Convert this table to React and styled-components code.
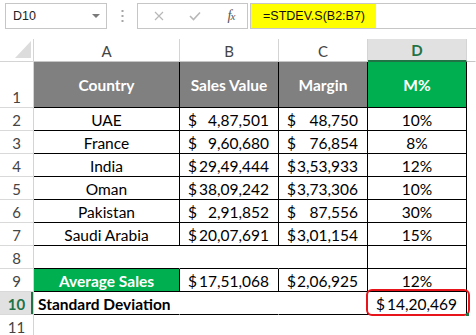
import React from "react";
import styled, { createGlobalStyle, css } from "styled-components";

const GlobalStyle = createGlobalStyle`
  html, body {
    margin: 0;
    padding: 0;
    background: #ffffff;
    overflow: hidden;
  }
  * { box-sizing: border-box; }
`;

const Page = styled.div`
  width: 476px;
  height: 335px;
  background: #fff;
  font-family: Lato, "Open Sans", sans-serif;
`;

const Bar = styled.div`
  height: 39px;
  display: flex;
  align-items: flex-start;
  padding: 3px 0 0 5px;
  font-family: "Liberation Sans", Arial, sans-serif;
  font-size: 12.5px;
  color: #222;
`;

const NameBox = styled.div`
  width: 102px;
  height: 26px;
  border: 1px solid #c6c6c6;
  display: flex;
  align-items: center;
  justify-content: space-between;
  padding: 0 6px 0 7px;
`;

const Caret = styled.span`
  width: 0;
  height: 0;
  border-left: 4px solid transparent;
  border-right: 4px solid transparent;
  border-top: 4px solid #7a7a7a;
`;

const Grip = styled.div`
  width: 30px;
  height: 26px;
  display: flex;
  align-items: center;
  justify-content: center;
`;

const FxBox = styled.div`
  width: 111px;
  height: 26px;
  border: 1px solid #c6c6c6;
  display: grid;
  grid-template-columns: 37px 36px 36px;
  align-items: center;
  justify-items: center;
  padding-left: 2px;
`;

const FxLabel = styled.span`
  font-family: "Liberation Serif", "Times New Roman", serif;
  font-style: italic;
  font-size: 14px;
  color: #555;
  letter-spacing: -1px;
  & > small {
    font-size: 11px;
  }
`;

const FormulaInput = styled.div`
  flex: 1;
  margin-left: 2px;
  height: 26px;
  border: 1px solid #c6c6c6;
  border-right: none;
  display: flex;
`;

const Highlight = styled.div`
  width: 125px;
  height: 100%;
  background: #ffff00;
  display: flex;
  align-items: center;
  padding-left: 12px;
  color: #111;
`;

const Sheet = styled.div`
  display: grid;
  grid-template-columns: 34px 146px 99px 89px 99px 1fr;
  grid-template-rows: 23px 46px repeat(9, 23px) 23px;
`;

const Corner = styled.div`
  border-right: 1px solid #d4d4d4;
  border-bottom: 1px solid #d4d4d4;
  display: flex;
  align-items: flex-end;
  justify-content: flex-end;
  padding: 0 2px 3px 0;
`;

const CornerTri = styled.span`
  width: 0;
  height: 0;
  border-left: 16px solid transparent;
  border-bottom: 17px solid #dcdcdc;
`;

const ColHead = styled.div`
  border-right: 1px solid ${(p) => (p.$last ? "transparent" : "#d4d4d4")};
  border-bottom: 1px solid #c6c6c6;
  display: flex;
  align-items: center;
  justify-content: center;
  font-size: 15px;
  color: #444;
  padding-top: 1px;
  ${(p) =>
    p.$active &&
    css`
      background: #e1e1e1;
      color: #217346;
      font-weight: 700;
      border-bottom: 2px solid #217346;
    `}
`;

const RowHead = styled.div`
  border-right: 1px solid #d4d4d4;
  border-bottom: 1px solid #d9d9d9;
  display: flex;
  align-items: flex-end;
  justify-content: center;
  font-size: 15px;
  line-height: 20px;
  color: #444;
  ${(p) =>
    p.$active &&
    css`
      background: #e1e1e1;
      color: #217346;
      font-weight: 700;
      box-shadow: inset -2px 0 0 #217346;
    `}
`;

const Cell = styled.div`
  position: relative;
  display: flex;
  align-items: ${(p) => (p.$middle ? "center" : "flex-end")};
  justify-content: ${(p) =>
    p.$align === "left" ? "flex-start" : p.$align === "acct" ? "space-between" : "center"};
  padding: ${(p) => (p.$align === "acct" ? "0 9px 0 8px" : p.$align === "left" ? "0 0 0 4px" : "0")};
  background: ${(p) => p.$bg || "transparent"};
  color: ${(p) => p.$color || "#000"};
  font-weight: ${(p) => (p.$bold ? 700 : 400)};
  font-size: 15.5px;
  line-height: 20px;
  white-space: nowrap;
  border-right: 1px solid ${(p) => (p.$open ? "transparent" : "#000")};
  border-bottom: 1px solid #000;
`;

const Blank = styled.div``;

const Mark = styled.div`
  position: absolute;
  left: -2px;
  top: -3px;
  width: 104px;
  height: 27px;
  border: 2.5px solid #e8141b;
  border-radius: 6px;
  pointer-events: none;
`;

const Handle = styled.span`
  position: absolute;
  right: -3px;
  bottom: -2px;
  width: 3px;
  height: 3px;
  background: #217346;
`;

const Acct = ({ v, sep }) => (
  <>
    <span>{sep ? "$ " : "$"}</span>
    <span>{v}</span>
  </>
);

const rows = [
  ["UAE", "4,87,501", "48,750", "10%"],
  ["France", "9,60,680", "76,854", "8%"],
  ["India", "29,49,444", "3,53,933", "12%"],
  ["Oman", "38,09,242", "3,73,306", "10%"],
  ["Pakistan", "2,91,852", "87,556", "30%"],
  ["Saudi Arabia", "20,07,691", "3,01,154", "15%"],
];

const GRAY = "#808080";
const GREEN = "#00b050";

export default function App() {
  return (
    <Page>
      <GlobalStyle />
      <Bar>
        <NameBox>
          <span>D10</span>
          <Caret />
        </NameBox>
        <Grip>
          <svg width="3" height="12" viewBox="0 0 3 12">
            <rect x="0.5" y="0" width="2" height="2" fill="#a6a6a6" />
            <rect x="0.5" y="5" width="2" height="2" fill="#a6a6a6" />
            <rect x="0.5" y="10" width="2" height="2" fill="#a6a6a6" />
          </svg>
        </Grip>
        <FxBox>
          <svg width="10" height="10" viewBox="0 0 10 10">
            <path d="M1 1 L9 9 M9 1 L1 9" stroke="#b8b8b8" strokeWidth="1.2" fill="none" />
          </svg>
          <svg width="12" height="10" viewBox="0 0 12 10">
            <path d="M1 5 L4.5 8.5 L11 1.5" stroke="#b8b8b8" strokeWidth="1.6" fill="none" />
          </svg>
          <FxLabel>
            f<small>x</small>
          </FxLabel>
        </FxBox>
        <FormulaInput>
          <Highlight>=STDEV.S(B2:B7)</Highlight>
        </FormulaInput>
      </Bar>

      <Sheet>
        <Corner>
          <CornerTri />
        </Corner>
        <ColHead>A</ColHead>
        <ColHead>B</ColHead>
        <ColHead>C</ColHead>
        <ColHead $active>D</ColHead>
        <ColHead $last />

        <RowHead>1</RowHead>
        <Cell $bg={GRAY} $color="#fff" $bold $middle>Country</Cell>
        <Cell $bg={GRAY} $color="#fff" $bold $middle>Sales Value</Cell>
        <Cell $bg={GRAY} $color="#fff" $bold $middle>Margin</Cell>
        <Cell $bg={GREEN} $color="#fff" $bold $middle>M%</Cell>
        <Blank />

        {rows.map((r, i) => (
          <React.Fragment key={r[0]}>
            <RowHead>{i + 2}</RowHead>
            <Cell>{r[0]}</Cell>
            <Cell $align="acct">
              <Acct v={r[1]} />
            </Cell>
            <Cell $align="acct">
              <Acct v={r[2]} />
            </Cell>
            <Cell>{r[3]}</Cell>
            <Blank />
          </React.Fragment>
        ))}

        <RowHead>8</RowHead>
        <Cell $open />
        <Cell $open />
        <Cell />
        <Cell />
        <Blank />

        <RowHead>9</RowHead>
        <Cell $bg={GREEN} $color="#fff" $bold>Average Sales</Cell>
        <Cell $align="acct">
          <Acct v="17,51,068" sep />
        </Cell>
        <Cell $align="acct">
          <Acct v="2,06,925" />
        </Cell>
        <Cell>12%</Cell>
        <Blank />

        <RowHead $active>10</RowHead>
        <Cell $open $bold $align="left">Standard Deviation</Cell>
        <Cell $open />
        <Cell />
        <Cell $align="acct">
          <Acct v="14,20,469" />
          <Mark />
          <Handle />
        </Cell>
        <Blank />

        <RowHead>11</RowHead>
      </Sheet>
    </Page>
  );
}
